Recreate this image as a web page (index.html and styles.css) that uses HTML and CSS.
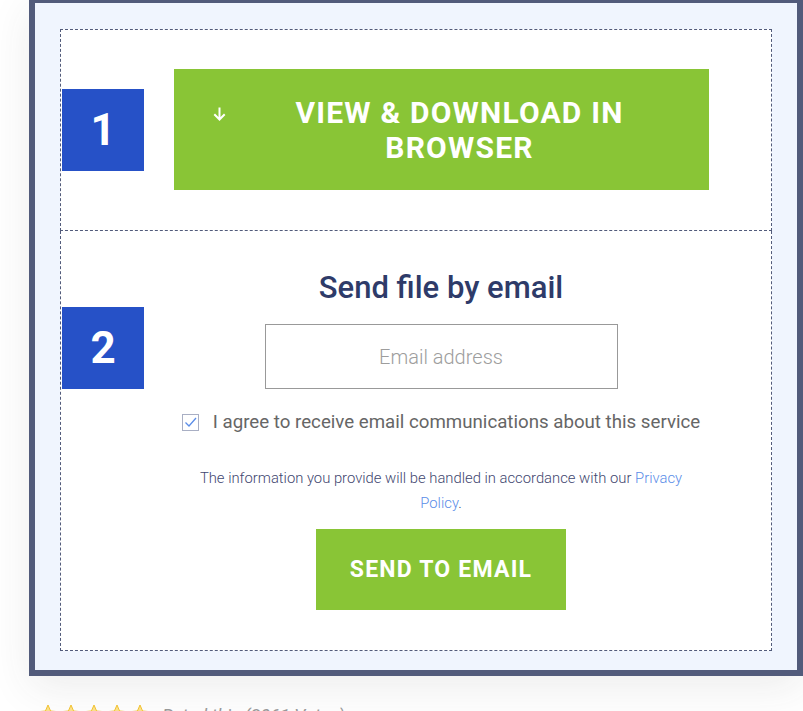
FILE: index.html
```html
<!DOCTYPE html>
<html lang="en">
<head>
<meta charset="utf-8">
<title>Download</title>
<link rel="stylesheet" href="styles.css">
</head>
<body>
<div class="frame">
  <div class="step step-first">
    <div class="badge">1</div>
    <div class="step-body">
      <a class="btn-view" href="#">
        <svg class="arrow" width="13" height="14" viewBox="0 0 13 14" aria-hidden="true">
          <path d="M6.5 0.5V12.5M1.3 7.3L6.5 12.5L11.7 7.3" fill="none" stroke="#fff" stroke-width="2"/>
        </svg>
        <span class="btn-view-text">VIEW &amp; DOWNLOAD IN BROWSER</span>
      </a>
    </div>
  </div>
  <div class="step step-second">
    <div class="badge badge-top">2</div>
    <div class="step-body form">
      <h2 class="title">Send file by email</h2>
      <input class="email" type="text" placeholder="Email address">
      <label class="agree">
        <span class="check">
          <svg width="17" height="17" viewBox="0 0 17 17" aria-hidden="true">
            <rect x="0.5" y="0.5" width="16" height="16" fill="#fff" stroke="#a9afc4"/>
            <path d="M3.5 8.5L7 12L14 4" fill="none" stroke="#5b8de8" stroke-width="1.3"/>
          </svg>
        </span>
        <span>I agree to receive email communications about this service</span>
      </label>
      <p class="info">The information you provide will be handled in accordance with our <a href="#">Privacy Policy</a>.</p>
      <a class="btn-send" href="#">SEND TO EMAIL</a>
    </div>
  </div>
</div>
<div class="rating">
  <span class="stars">
    <svg width="112" height="20" viewBox="0 0 112 20" aria-hidden="true">
      <g fill="#fbe08a" stroke="#f1c232" stroke-width="1">
        <path d="M10 1l2.6 6 6.4.6-4.8 4.3 1.4 6.3L10 15l-5.6 3.2 1.4-6.3L1 7.6l6.4-.6z"/>
        <path transform="translate(23 0)" d="M10 1l2.6 6 6.4.6-4.8 4.3 1.4 6.3L10 15l-5.6 3.2 1.4-6.3L1 7.6l6.4-.6z"/>
        <path transform="translate(46 0)" d="M10 1l2.6 6 6.4.6-4.8 4.3 1.4 6.3L10 15l-5.6 3.2 1.4-6.3L1 7.6l6.4-.6z"/>
        <path transform="translate(69 0)" d="M10 1l2.6 6 6.4.6-4.8 4.3 1.4 6.3L10 15l-5.6 3.2 1.4-6.3L1 7.6l6.4-.6z"/>
        <path transform="translate(92 0)" d="M10 1l2.6 6 6.4.6-4.8 4.3 1.4 6.3L10 15l-5.6 3.2 1.4-6.3L1 7.6l6.4-.6z"/>
      </g>
    </svg>
  </span>
  <span class="rated">Rated this (2061 Votes)</span>
</div>
</body>
</html>
```

FILE: styles.css
```css
html, body {
  margin: 0;
  padding: 0;
  background: #fff;
  font-family: Roboto, "Noto Sans", Arial, sans-serif;
  overflow: hidden;
}

.frame {
  margin: -3px 0 0 29px;
  border: 6px solid #525b7b;
  background: #f0f5fe;
  padding: 26px 25px 19px;
  box-shadow: 0 12px 40px rgba(60, 60, 60, 0.09);
}

.step {
  display: grid;
  grid-template-columns: 82px 1fr;
  border: 1px dashed #525b7b;
  background: #fff;
  padding: 0 33px 0 1px;
}

.step-first {
  align-items: center;
  padding-top: 39px;
  padding-bottom: 40px;
}

.step-second {
  border-top: none;
  align-items: start;
  padding-top: 39px;
  padding-bottom: 40px;
}

.badge {
  width: 82px;
  height: 82px;
  background: #2651c7;
  color: #fff;
  font-weight: 700;
  font-size: 44px;
  display: flex;
  align-items: center;
  justify-content: center;
}

.badge-top {
  margin-top: 37px;
}

.step-body {
  display: flex;
  flex-direction: column;
  align-items: center;
}

.btn-view {
  width: 535px;
  height: 121px;
  box-sizing: border-box;
  background: #89c536;
  color: #fff;
  text-decoration: none;
  display: flex;
  align-items: center;
  padding: 0 39px;
  gap: 24px;
}

.arrow {
  flex: none;
  margin-top: -32px;
}

.btn-view-text {
  flex: 1;
  text-align: center;
  font-size: 30px;
  line-height: 35px;
  font-weight: 700;
  letter-spacing: 1.2px;
}

.title {
  margin: 0;
  font-size: 31px;
  line-height: 36px;
  font-weight: 500;
  color: #2e3b69;
}

.email {
  margin-top: 18px;
  width: 353px;
  height: 65px;
  box-sizing: border-box;
  border: 1px solid #999;
  font-family: Roboto, sans-serif;
  font-size: 20px;
  font-weight: 300;
  text-align: center;
  color: #333;
  outline: none;
}

.email::placeholder {
  color: #9d9d9d;
}

.agree {
  margin-top: 22px;
  display: flex;
  align-items: center;
  gap: 14px;
  font-size: 18.7px;
  color: #666;
  line-height: 22px;
}

.check {
  display: flex;
}

.info {
  margin: 33px 0 0;
  max-width: 500px;
  text-align: center;
  font-size: 14.8px;
  font-weight: 300;
  line-height: 25px;
  color: #3f4770;
}

.info a {
  color: #5b8de8;
  text-decoration: none;
}

.btn-send {
  margin-top: 13px;
  width: 250px;
  height: 81px;
  background: #89c536;
  color: #fff;
  text-decoration: none;
  font-size: 23px;
  font-weight: 700;
  letter-spacing: 1.2px;
  display: flex;
  align-items: center;
  justify-content: center;
}

.rating {
  margin: 28px 0 0 38px;
  display: flex;
  align-items: flex-start;
  gap: 12px;
}

.stars {
  display: flex;
}

.rated {
  font-size: 18px;
  font-style: italic;
  color: #999;
  line-height: 20px;
  margin-top: 2px;
}
```
